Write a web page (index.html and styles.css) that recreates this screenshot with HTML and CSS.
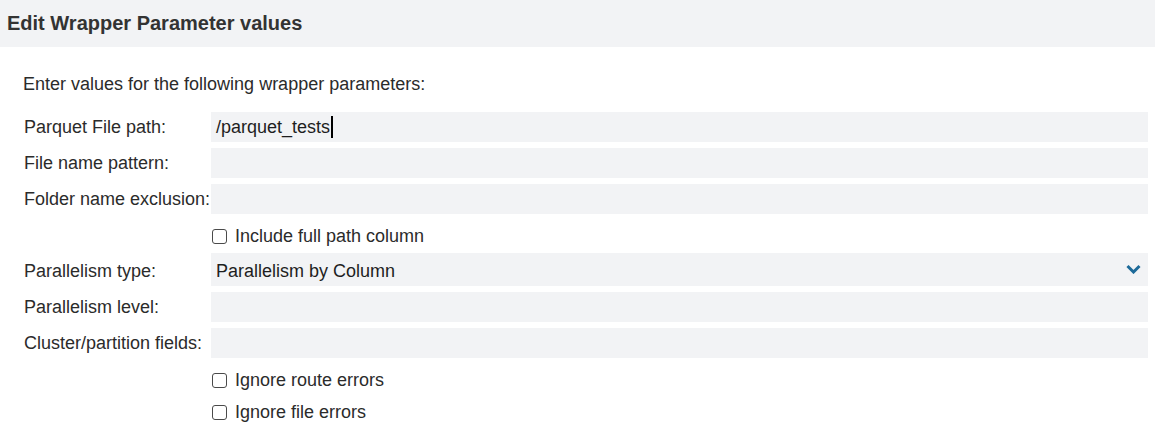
FILE: index.html
```html
<!DOCTYPE html>
<html>
<head>
<meta charset="utf-8">
<link rel="stylesheet" href="styles.css">
</head>
<body>
<div class="header">Edit Wrapper Parameter values</div>
<div class="content">
  <p class="intro">Enter values for the following wrapper parameters:</p>
  <div class="form">
    <div class="row"><label>Parquet File path:</label><div class="field"><span class="val">/parquet_tests</span><span class="caret"></span></div></div>
    <div class="row"><label>File name pattern:</label><div class="field"></div></div>
    <div class="row"><label>Folder name exclusion:</label><div class="field"></div></div>
    <div class="check-row first"><span class="box"></span><span>Include full path column</span></div>
    <div class="row select-row"><label>Parallelism type:</label><div class="field select"><span class="val">Parallelism by Column</span>
      <svg class="chev" width="15" height="10" viewBox="0 0 15 10"><path d="M1.5 2 L7.5 8 L13.5 2" fill="none" stroke="#1d6a99" stroke-width="3"/></svg></div></div>
    <div class="row"><label>Parallelism level:</label><div class="field"></div></div>
    <div class="row"><label>Cluster/partition fields:</label><div class="field"></div></div>
    <div class="check-row second"><span class="box"></span><span>Ignore route errors</span></div>
    <div class="check-row third"><span class="box"></span><span>Ignore file errors</span></div>
  </div>
</div>
</body>
</html>
```
FILE: styles.css
```css
html, body {
  margin: 0;
  padding: 0;
  background: #fff;
  font-family: "Liberation Sans", Arial, sans-serif;
  color: #2b2b2b;
}
.header {
  height: 47px;
  background: #f2f3f5;
  font-weight: bold;
  font-size: 20px;
  line-height: 46px;
  padding-left: 7px;
  color: #333;
}
.content {
  padding: 0 7px 0 23px;
}
.intro {
  margin: 0;
  padding-top: 26px;
  line-height: 22px;
  font-size: 18px;
  box-sizing: border-box;
  height: 65px;
}
.form {
  display: flex;
  flex-direction: column;
}
.row {
  display: flex;
  align-items: center;
  height: 30px;
  margin-bottom: 6px;
  font-size: 18px;
}
.row label {
  width: 188px;
  flex: none;
  padding-left: 1px;
  box-sizing: border-box;
  white-space: nowrap;
}
.field {
  flex: 1;
  height: 30px;
  background: #f2f3f5;
  display: flex;
  align-items: center;
  padding-left: 5px;
  position: relative;
}
.val {
  font-size: 18px;
  color: #1e1e1e;
}
.caret {
  display: inline-block;
  width: 2px;
  height: 22px;
  background: #000;
  margin-left: 1px;
}
.select-row {
  height: 33px;
}
.select-row label {
  padding-top: 3px;
}
.select-row .field {
  height: 33px;
  box-sizing: border-box;
  padding-top: 3px;
}
.chev {
  position: absolute;
  right: 7px;
  top: 11px;
}
.check-row {
  display: flex;
  align-items: center;
  padding-left: 189px;
  font-size: 18px;
  height: 24px;
  gap: 8px;
}
.check-row.first {
  margin-top: 4px;
  margin-bottom: 5px;
}
.check-row.second {
  margin-top: 4px;
  margin-bottom: 8px;
}
.box {
  width: 13px;
  height: 13px;
  border: 1.5px solid #4a4a4a;
  border-radius: 3px;
  background: #fff;
  flex: none;
}
```
